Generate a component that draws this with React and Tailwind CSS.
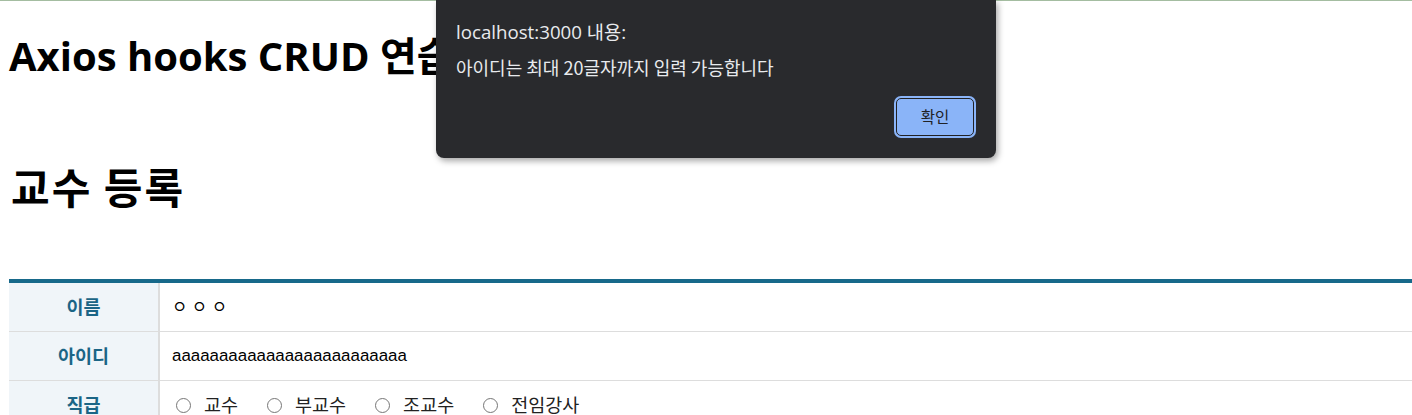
import React from 'react'

const POSITIONS = ['교수', '부교수', '조교수', '전임강사']

function Radio({ label }) {
  return (
    <label className="flex items-center">
      <span className="w-[15px] h-[15px] rounded-full border border-[#767676] bg-white" />
      <span className="ml-[13px] mr-[29px] text-[18.5px] text-[#222]">{label}</span>
    </label>
  )
}

function Row({ label, children, last }) {
  return (
    <div className={`grid grid-cols-[151px_1fr] ${last ? '' : 'border-b border-[#dddddd]'}`}>
      <div className="h-[48px] bg-[#f0f5f9] border-r-2 border-[#dddddd] flex items-center justify-center text-[18.5px] font-bold text-[#1b6586]">
        {label}
      </div>
      <div className="h-[48px] flex items-center pl-[12px]">{children}</div>
    </div>
  )
}

export default function App() {
  return (
    <div className="relative h-[415px] overflow-hidden bg-white font-['Noto_Sans_CJK_KR',sans-serif] text-black">
      <div className="h-px bg-[#a4bda1]" />

      <div className="pl-[9px]">
        <h1 className="mt-[31px] text-[40px] leading-[48px] font-bold font-['Open_Sans','Noto_Sans_CJK_KR',sans-serif]">
          Axios hooks CRUD 연습
        </h1>
        <h2 className="mt-[82px] text-[42px] leading-[48px] font-bold tracking-[2px] pl-[2px]">교수 등록</h2>

        {/* form table */}
        <div className="mt-[69px] border-t-4 border-[#17698a]">
          <Row label="이름">
            <span className="text-[16.7px] tracking-[4.5px]">ㅇㅇㅇ</span>
          </Row>
          <Row label="아이디">
            <span className="text-[16.9px] font-['Liberation_Sans',sans-serif]">aaaaaaaaaaaaaaaaaaaaaaaaa</span>
          </Row>
          <Row label="직급" last>
            <div className="flex items-center pl-[4px]">
              {POSITIONS.map(p => <Radio key={p} label={p} />)}
            </div>
          </Row>
        </div>
      </div>

      {/* alert dialog */}
      <div className="absolute left-[436px] top-0 w-[560px] h-[158px] bg-[#292a2d] rounded-b-[8px] shadow-[2px_3px_6px_rgba(0,0,0,0.35)] px-[20px]">
        <p className="pt-[19px] text-[18.7px] leading-[26px] text-[#e8eaed] font-['Open_Sans','Noto_Sans_CJK_KR',sans-serif]">
          localhost:3000 내용:
        </p>
        <p className="mt-[10px] text-[18px] leading-[24px] text-[#e8eaed]">
          아이디는 최대 20글자까지 입력 가능합니다
        </p>
        <div className="flex justify-end mt-[19px] pr-[2px]">
          <button className="w-[78px] h-[38px] rounded-[5px] bg-[#8ab4f8] border border-[#202124] ring-2 ring-[#8ab4f8] text-[15.5px] text-[#202124]">
            확인
          </button>
        </div>
      </div>
    </div>
  )
}
